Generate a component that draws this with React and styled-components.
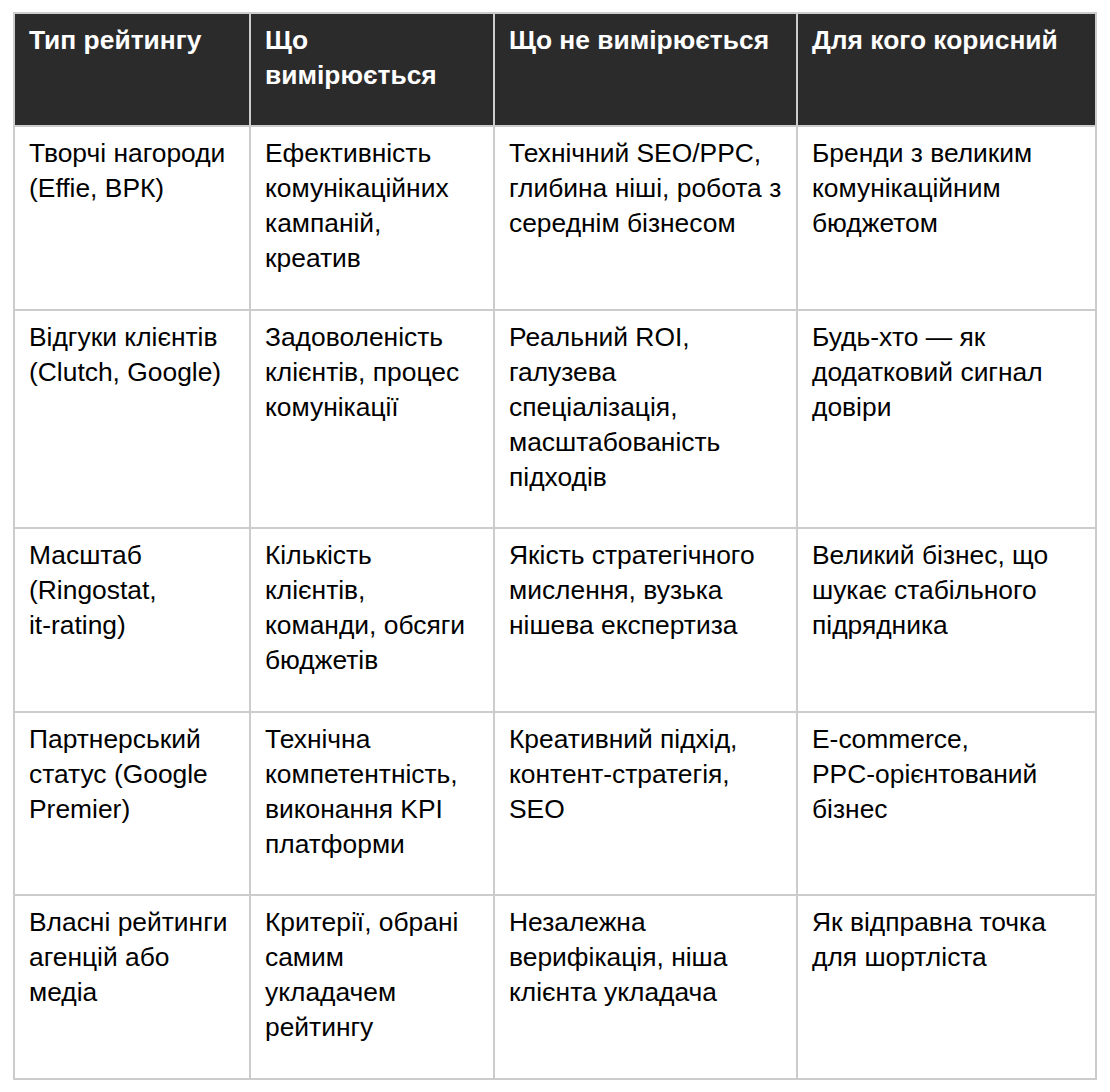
import React from "react";
import styled, { createGlobalStyle } from "styled-components";

const Global = createGlobalStyle`
  html, body { margin: 0; padding: 0; background: #ffffff; }
  body { font-family: "Liberation Sans", Arial, sans-serif; }
`;

const Page = styled.div`
  padding: 12px 13px;
`;

const Table = styled.table`
  border-collapse: separate;
  border-spacing: 0;
  table-layout: fixed;
  width: 1084px;
  border-top: 2px solid #cccccc;
  border-left: 2px solid #cccccc;
  font-family: "Liberation Sans", Arial, sans-serif;
  font-size: 26.4px;
  line-height: 35px;
`;

const Col = styled.col`
  width: ${(p) => p.$w}px;
`;

const Th = styled.th`
  box-sizing: border-box;
  background: #2b2b2b;
  color: #ffffff;
  font-weight: 700;
  text-align: left;
  vertical-align: top;
  padding: 9px 14px 32px 14px;
  border-right: 2px solid #cccccc;
  border-bottom: 2px solid #cccccc;
`;

const Td = styled.td`
  box-sizing: border-box;
  color: #000000;
  font-weight: 400;
  text-align: left;
  vertical-align: top;
  padding: 9px 14px 32.5px 14px;
  border-right: 2px solid #cccccc;
  border-bottom: 2px solid #cccccc;
`;

const NoWrap = styled.span`
  white-space: nowrap;
`;

const widths = [236, 244, 303, 299];

const headers = [
  "Тип рейтингу",
  "Що вимірюється",
  "Що не вимірюється",
  "Для кого корисний",
];

const rows = [
  [
    "Творчі нагороди (Effie, ВРК)",
    "Ефективність комунікаційних кампаній, креатив",
    "Технічний SEO/PPC, глибина ніші, робота з середнім бізнесом",
    "Бренди з великим комунікаційним бюджетом",
  ],
  [
    "Відгуки клієнтів (Clutch, Google)",
    "Задоволеність клієнтів, процес комунікації",
    "Реальний ROI, галузева спеціалізація, масштабованість підходів",
    "Будь-хто — як додатковий сигнал довіри",
  ],
  [
    <>
      Масштаб (Ringostat, <NoWrap>it-rating)</NoWrap>
    </>,
    "Кількість клієнтів, команди, обсяги бюджетів",
    "Якість стратегічного мислення, вузька нішева експертиза",
    "Великий бізнес, що шукає стабільного підрядника",
  ],
  [
    "Партнерський статус (Google Premier)",
    "Технічна компетентність, виконання KPI платформи",
    "Креативний підхід, контент-стратегія, SEO",
    <>
      E-commerce, <NoWrap>PPC-орієнтований</NoWrap> бізнес
    </>,
  ],
  [
    "Власні рейтинги агенцій або медіа",
    "Критерії, обрані самим укладачем рейтингу",
    "Незалежна верифікація, ніша клієнта укладача",
    "Як відправна точка для шортліста",
  ],
];

export default function App() {
  return (
    <>
      <Global />
      <Page>
        <Table>
          <colgroup>
            {widths.map((w, i) => (
              <Col key={i} $w={w} />
            ))}
          </colgroup>
          <thead>
            <tr>
              {headers.map((h, i) => (
                <Th key={i}>{h}</Th>
              ))}
            </tr>
          </thead>
          <tbody>
            {rows.map((r, ri) => (
              <tr key={ri}>
                {r.map((c, ci) => (
                  <Td key={ci}>{c}</Td>
                ))}
              </tr>
            ))}
          </tbody>
        </Table>
      </Page>
    </>
  );
}
